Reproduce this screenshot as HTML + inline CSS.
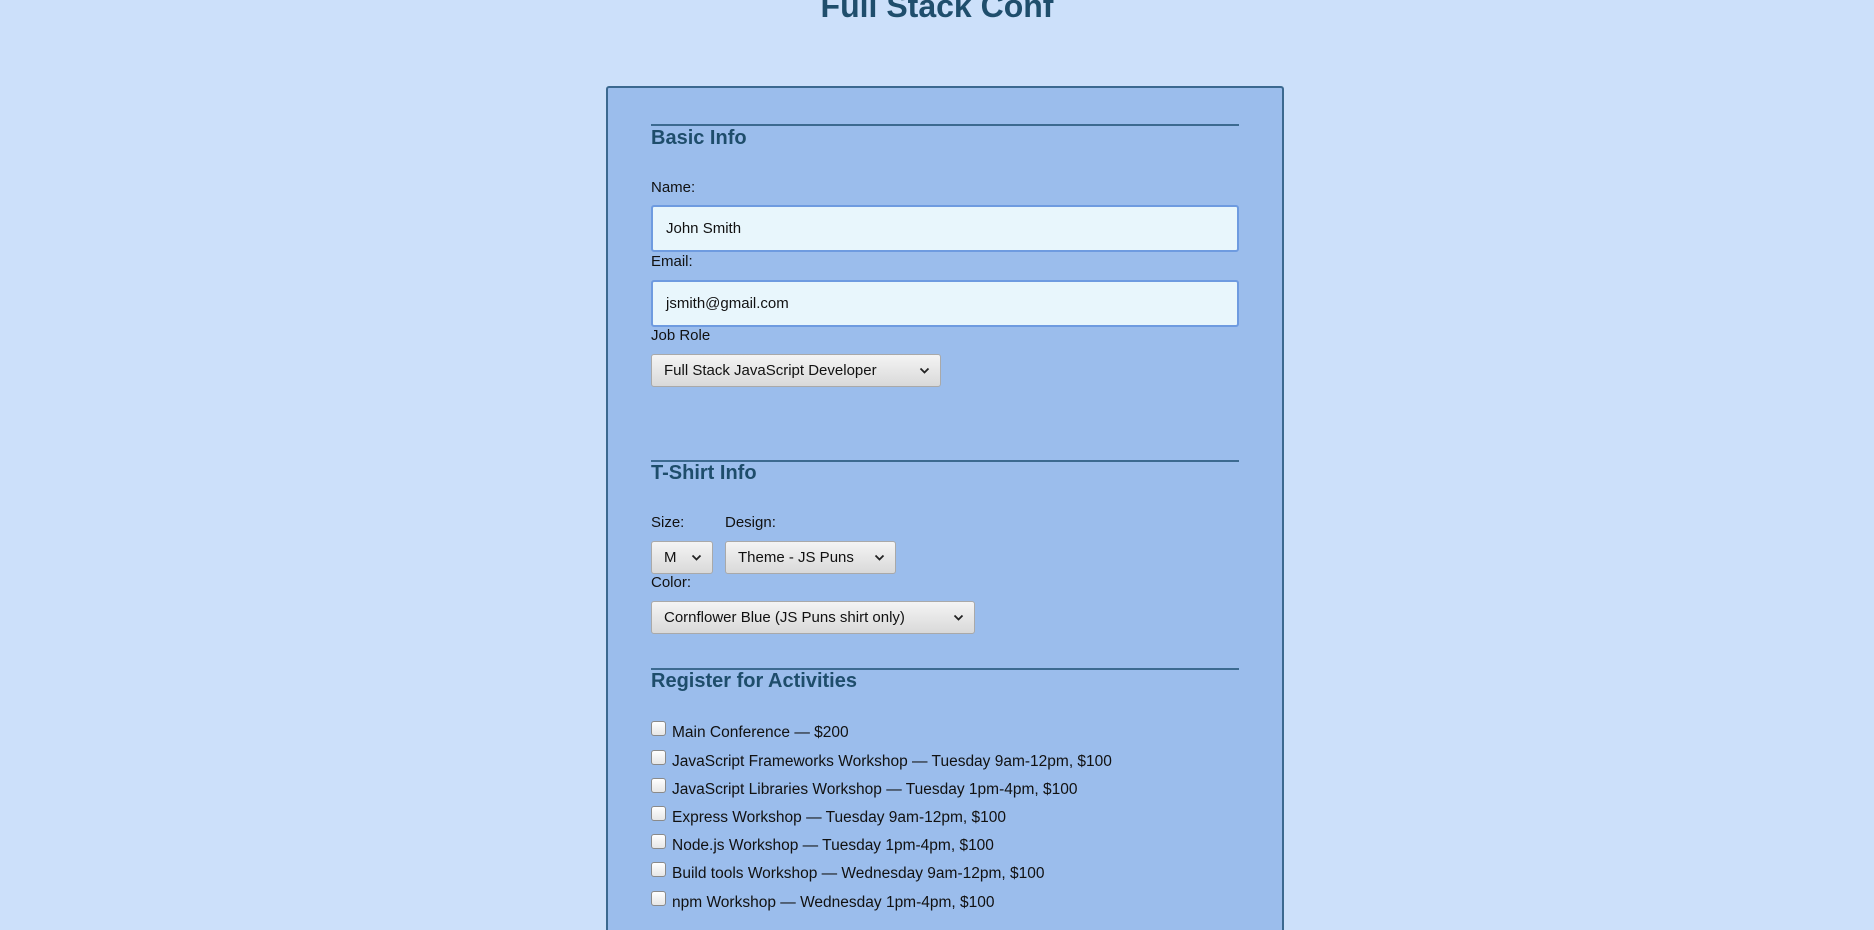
<!DOCTYPE html>
<html><head><meta charset="utf-8"><style>
*{box-sizing:border-box;margin:0;padding:0}
html,body{width:1874px;height:928px;overflow:hidden;background:#cce0fa;font-family:"Liberation Sans",sans-serif;color:#111}
.a{position:absolute}
h1{position:absolute;left:0;width:1874px;text-align:center;top:-12px;font-size:32px;font-weight:bold;color:#1f4e6c;line-height:36px}
.box{left:606px;top:86px;width:678px;height:844px;background:#9bbdec;border:2px solid #3b6990;border-bottom:none;border-radius:3px 3px 0 0}
.rule{left:651px;width:588px;height:2px;background:#3c6a90}
.h{left:651px;font-size:20px;font-weight:bold;color:#1e4d6b;line-height:24px}
.lab{font-size:15px;line-height:18px;color:#111}
.inp{left:651px;width:588px;height:47px;background:#e8f6fc;border:2px solid #6e9be0;border-radius:3px;font-size:15px;padding-left:13px;line-height:43px}
.sel{height:33px;background:linear-gradient(#f4f4f4,#d9d9d9);border:1px solid #a9a9a9;border-radius:3px;font-size:15px;line-height:31px;padding-left:12px}
.sel svg{position:absolute;right:10px;top:12px}
.cb{left:651px;width:15px;height:15px;border:1px solid #8a8a8a;border-radius:3px;background:linear-gradient(#fff,#e6e6e6)}
.ct{left:672px;font-size:15.5px;line-height:18px}
</style></head><body>
<h1>Full Stack Conf</h1>
<div class="a box"></div>
<div class="a rule" style="top:124px"></div>
<div class="a h" style="top:126px">Basic Info</div>
<div class="a lab" style="left:651px;top:179px">Name:</div>
<div class="a inp" style="top:205px">John Smith</div>
<div class="a lab" style="left:651px;top:253px">Email:</div>
<div class="a inp" style="top:280px">jsmith@gmail.com</div>
<div class="a lab" style="left:651px;top:327px">Job Role</div>
<div class="a sel" style="left:651px;top:354px;width:290px">Full Stack JavaScript Developer<svg width="11" height="8" viewBox="0 0 11 8"><path d="M1.5 1.5l4 4 4-4" fill="none" stroke="#222" stroke-width="1.8"/></svg></div>
<div class="a rule" style="top:460px"></div>
<div class="a h" style="top:461px">T-Shirt Info</div>
<div class="a lab" style="left:651px;top:514px">Size:</div>
<div class="a lab" style="left:725px;top:514px">Design:</div>
<div class="a sel" style="left:651px;top:541px;width:62px">M<svg width="11" height="8" viewBox="0 0 11 8"><path d="M1.5 1.5l4 4 4-4" fill="none" stroke="#222" stroke-width="1.8"/></svg></div>
<div class="a sel" style="left:725px;top:541px;width:171px">Theme - JS Puns<svg width="11" height="8" viewBox="0 0 11 8"><path d="M1.5 1.5l4 4 4-4" fill="none" stroke="#222" stroke-width="1.8"/></svg></div>
<div class="a lab" style="left:651px;top:574px">Color:</div>
<div class="a sel" style="left:651px;top:601px;width:324px">Cornflower Blue (JS Puns shirt only)<svg width="11" height="8" viewBox="0 0 11 8"><path d="M1.5 1.5l4 4 4-4" fill="none" stroke="#222" stroke-width="1.8"/></svg></div>
<div class="a rule" style="top:668px"></div>
<div class="a h" style="top:669px">Register for Activities</div>
<div class="a cb" style="top:721px"></div><div class="a ct" style="top:724px">Main Conference — $200</div>
<div class="a cb" style="top:750px"></div><div class="a ct" style="top:753px">JavaScript Frameworks Workshop — Tuesday 9am-12pm, $100</div>
<div class="a cb" style="top:778px"></div><div class="a ct" style="top:781px">JavaScript Libraries Workshop — Tuesday 1pm-4pm, $100</div>
<div class="a cb" style="top:806px"></div><div class="a ct" style="top:809px">Express Workshop — Tuesday 9am-12pm, $100</div>
<div class="a cb" style="top:834px"></div><div class="a ct" style="top:837px">Node.js Workshop — Tuesday 1pm-4pm, $100</div>
<div class="a cb" style="top:862px"></div><div class="a ct" style="top:865px">Build tools Workshop — Wednesday 9am-12pm, $100</div>
<div class="a cb" style="top:891px"></div><div class="a ct" style="top:894px">npm Workshop — Wednesday 1pm-4pm, $100</div>
</body></html>
